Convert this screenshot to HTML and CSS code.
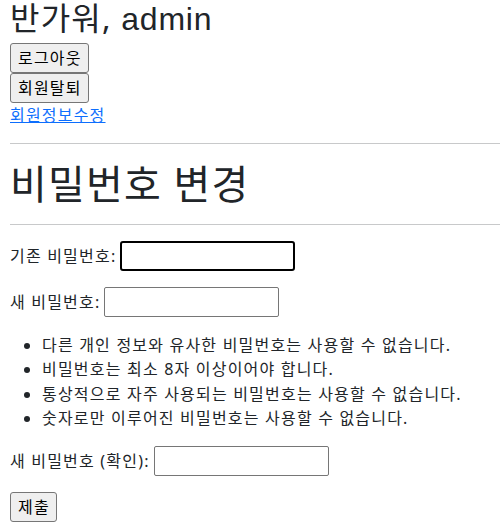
FILE: index.html
```html
<!DOCTYPE html>
<html lang="ko">
<head>
<meta charset="utf-8">
<title>비밀번호 변경</title>
<link rel="stylesheet" href="styles.css">
</head>
<body>
<h2 class="greet">반가워, <span class="latin">admin</span></h2>
<form class="blk"><button type="button" class="btn">로그아웃</button></form>
<form class="blk"><button type="button" class="btn">회원탈퇴</button></form>
<a href="#" class="link">회원정보수정</a>
<hr class="rule">
<h1 class="title">비밀번호 변경</h1>
<hr class="rule">
<form class="pwform">
  <p class="row"><label class="lbl">기존 비밀번호:</label><input type="password" class="field focused"></p>
  <p class="row"><label class="lbl">새 비밀번호:</label><input type="password" class="field"></p>
  <ul class="help">
    <li>다른 개인 정보와 유사한 비밀번호는 사용할 수 없습니다.</li>
    <li>비밀번호는 최소 8자 이상이어야 합니다.</li>
    <li>통상적으로 자주 사용되는 비밀번호는 사용할 수 없습니다.</li>
    <li>숫자로만 이루어진 비밀번호는 사용할 수 없습니다.</li>
  </ul>
  <p class="row"><label class="lbl">새 비밀번호 (확인):</label><input type="password" class="field"></p>
  <div class="blk"><button type="button" class="btn">제출</button></div>
</form>
</body>
</html>
```
FILE: styles.css
```css
html, body {
  margin: 0;
  padding: 0;
}
body {
  padding-left: 10px;
  font-family: "Noto Sans", "Noto Sans CJK KR", sans-serif;
  font-size: 16px;
  line-height: 24px;
  letter-spacing: 0.075em;
  color: #212529;
  background: #fff;
}
.greet {
  margin: 0 0 8px;
  height: 35px;
  font-size: 32px;
  font-weight: 400;
  line-height: 35px;
}
.latin {
  font-family: "Liberation Sans", "Noto Sans", sans-serif;
  letter-spacing: 0.025em;
  line-height: 0;
}
.blk {
  margin: 0;
  display: flex;
}
.btn {
  box-sizing: border-box;
  font-family: inherit;
  font-size: 16px;
  line-height: 24px;
  letter-spacing: 0.075em;
  height: 30px;
  padding: 0 6px 0 7px;
  margin: 0;
  color: #000;
  background: #efefef;
  border: 1px solid #767676;
  border-radius: 3px;
}
.link {
  display: inline-block;
  height: 24px;
  color: #0d6efd;
  text-decoration: underline;
}
.rule {
  margin: 16px 0;
  border: 0;
  border-top: 1px solid #c8c9ca;
  height: 0;
}
.title {
  margin: 0 0 8px;
  font-size: 40px;
  font-weight: 400;
  line-height: 48px;
}
.pwform {
  margin: 0;
}
.row {
  margin: 0 0 16px;
  height: 30px;
  display: flex;
  align-items: center;
  gap: 4px;
}
.field {
  box-sizing: border-box;
  width: 175px;
  height: 30px;
  margin: 0;
  padding: 1px 2px;
  font-family: inherit;
  font-size: 16px;
  border: 1px solid #767676;
  border-radius: 2px;
  background: #fff;
}
.focused {
  border: 2px solid #000;
  border-radius: 3px;
}
.help {
  margin: 0 0 16px;
  padding-left: 32px;
  line-height: 24.25px;
}
```
